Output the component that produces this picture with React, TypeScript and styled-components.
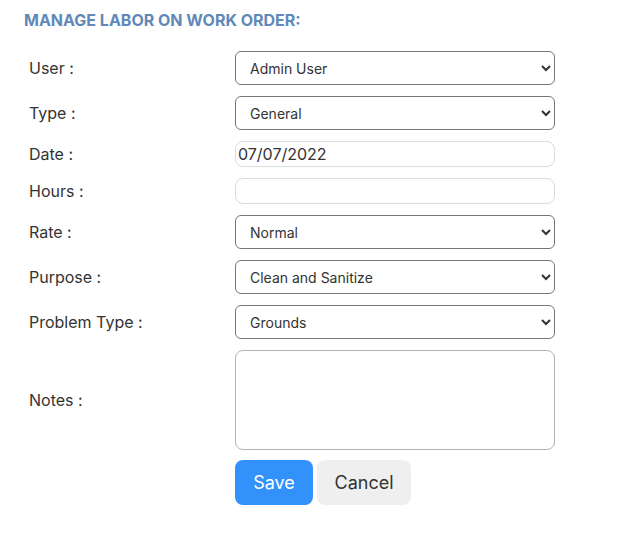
import React from "react";
import styled, { createGlobalStyle } from "styled-components";

const Global = createGlobalStyle`
  html, body { margin: 0; padding: 0; background: #fff; }
  body { font-family: Inter, "Noto Sans", sans-serif; color: #333; }
`;

const Page = styled.div`
  padding: 11px 0 0 24px;
`;

const Heading = styled.h2`
  margin: 0 0 21px 0;
  font-size: 16px;
  line-height: 19px;
  font-weight: 700;
  color: #6189b8;
  text-transform: uppercase;
`;

const Form = styled.form`
  display: grid;
  grid-template-columns: 206px 320px;
  row-gap: 11px;
  padding-left: 5px;
  align-items: center;
`;

const Label = styled.label`
  font-size: 16px;
  color: #333;
  line-height: 19px;
`;

const Select = styled.select`
  height: 34px;
  width: 320px;
  font-family: Inter, "Noto Sans", sans-serif;
  font-size: 14px;
  color: #333;
  background: #fff;
  border: 1px solid #767676;
  border-radius: 6px;
  padding: 0 8px 0 10px;
  box-sizing: border-box;
`;

const TextInput = styled.input`
  height: 26px;
  width: 320px;
  box-sizing: border-box;
  font-family: Inter, "Noto Sans", sans-serif;
  font-size: 16px;
  color: #333;
  border: 1px solid #dcdcdc;
  border-radius: 8px;
  padding: 0 2px;
  outline: none;
`;

const TextArea = styled.textarea`
  height: 100px;
  width: 320px;
  box-sizing: border-box;
  border: 1px solid #b3b3b3;
  border-radius: 8px;
  resize: none;
  font-family: Inter, "Noto Sans", sans-serif;
  font-size: 15px;
`;

const Buttons = styled.div`
  grid-column: 2;
  display: flex;
  gap: 4px;
  margin-top: -1px;
`;

const Button = styled.button<{ $primary?: boolean; $w: number }>`
  height: 45px;
  width: ${(p) => p.$w}px;
  border: none;
  border-radius: 8px;
  font-family: Inter, "Noto Sans", sans-serif;
  font-size: 18px;
  background: ${(p) => (p.$primary ? "#3391fb" : "#efefef")};
  color: ${(p) => (p.$primary ? "#fff" : "#333")};
  cursor: pointer;
`;

const selects: [string, string][] = [
  ["User :", "Admin User"],
  ["Type :", "General"],
];

export default function App() {
  return (
    <>
      <Global />
      <Page>
        <Heading>Manage Labor on Work Order:</Heading>
        <Form onSubmit={(e) => e.preventDefault()}>
          {selects.map(([l, v]) => (
            <React.Fragment key={l}>
              <Label>{l}</Label>
              <Select defaultValue={v}>
                <option>{v}</option>
              </Select>
            </React.Fragment>
          ))}
          <Label>Date :</Label>
          <TextInput defaultValue="07/07/2022" />
          <Label>Hours :</Label>
          <TextInput defaultValue="" />
          <Label>Rate :</Label>
          <Select defaultValue="Normal">
            <option>Normal</option>
          </Select>
          <Label>Purpose :</Label>
          <Select defaultValue="Clean and Sanitize">
            <option>Clean and Sanitize</option>
          </Select>
          <Label>Problem Type :</Label>
          <Select defaultValue="Grounds">
            <option>Grounds</option>
          </Select>
          <Label>Notes :</Label>
          <TextArea />
          <Buttons>
            <Button $primary $w={78} type="submit">Save</Button>
            <Button $w={94} type="button">Cancel</Button>
          </Buttons>
        </Form>
      </Page>
    </>
  );
}
